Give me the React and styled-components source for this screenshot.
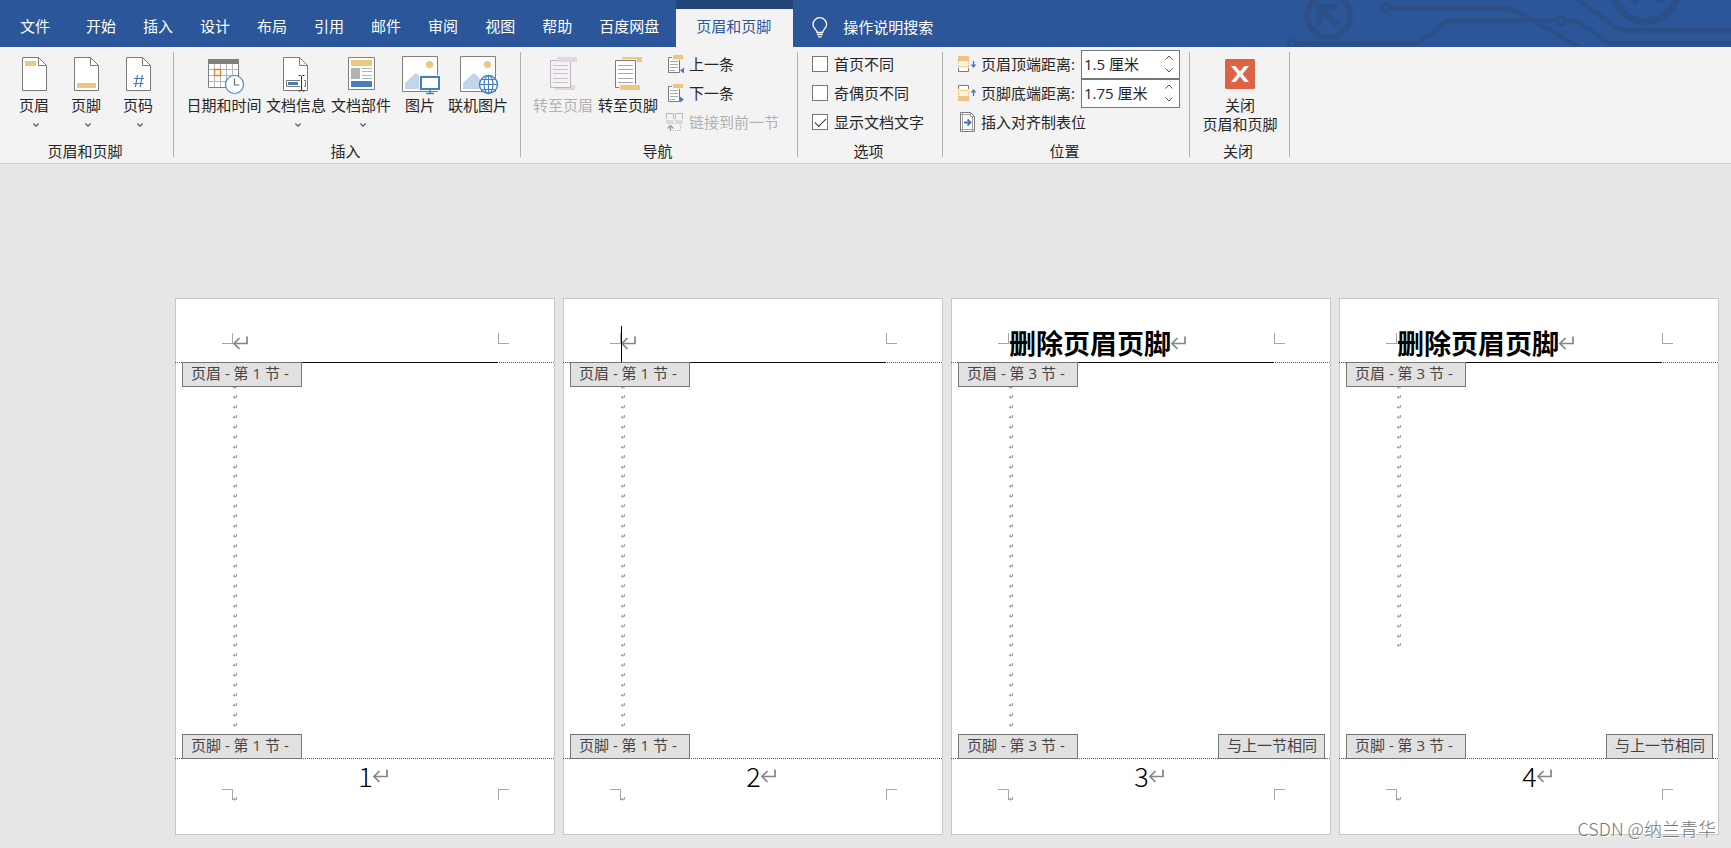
import React, { useState } from 'react';
import styled, { createGlobalStyle } from 'styled-components';

const tabs = ['开始', '插入', '设计', '布局', '引用', '邮件', '审阅', '视图', '帮助', '百度网盘'];

const pages = [
    { no: 1, section: 1, title: '', lines: 35 },
    { no: 2, section: 1, title: '', lines: 35, caret: true },
    { no: 3, section: 3, title: '删除页眉页脚', lines: 35, linked: true },
    { no: 4, section: 3, title: '删除页眉页脚', lines: 27, linked: true },
];

/* ---------- icons ---------- */

const Big = ({ children }) => (
    <svg width="38" height="38" viewBox="0 0 38 38" fill="none" overflow="visible" aria-hidden="true">{children}</svg>
);

const Small = ({ children }) => (
    <svg width="18" height="18" viewBox="0 0 18 18" fill="none" overflow="visible" aria-hidden="true">{children}</svg>
);

const Sheet = ({ x = 7 }) => (
    <g transform={`translate(${x} 1)`} stroke="#7a7a7a">
        <path d="M.5.5h16l8 8v25H.5z" fill="#fff" />
        <path d="M16.5.5v8h8" />
    </g>
);

const HeaderIcon = () => <Big><Sheet /><path d="M10 5h11v5H10z" fill="#eec77f" /></Big>;
const FooterIcon = () => <Big><Sheet /><path d="M10 27h19v5H10z" fill="#eec77f" /></Big>;
const NumberIcon = () => (
    <Big><Sheet /><path d="M18.6 19l-2.2 12M23.4 19l-2.2 12M15 22.5h10M14.4 27.5h10" stroke="#4580bb" strokeWidth="1.2" /></Big>
);

const CalendarIcon = () => (
    <Big>
        <path d="M3.5 4v27.5h30V4z" fill="#fff" stroke="#7f7f7f" />
        <path d="M9.5 8v23M15.5 8v23M21.5 8v23M27.5 8v23M4 13.5h29M4 19.5h29M4 25.5h29" stroke="#b5b5b5" />
        <path d="M3 3h31v5H3z" fill="#7f7f7f" />
        <path d="M9.5 13.5h6v6h-6z" fill="#fff" stroke="#e2803a" strokeWidth="1.3" />
        <circle cx="29.5" cy="28.5" r="9" fill="#fff" stroke="#4b86c2" strokeWidth="1.2" />
        <path d="M29.5 22.5v6.500h5" stroke="#6e6e6e" strokeWidth="1.2" />
    </Big>
);

const DocInfoIcon = () => (
    <Big>
        <Sheet x={6} />
        <path d="M23 24.5H9.5v6H23M27 24.5h1.5v6H27" stroke="#7a7a7a" />
        <path d="M11 26h10v3H11z" fill="#4580bb" />
        <path d="M24.5 20v15M21.5 19.5h2l1 1 1-1h2M21.5 35h2l1-1 1 1h2" stroke="#333" />
    </Big>
);

const PartsIcon = () => (
    <Big>
        <path d="M6.5 1.5h26v32h-26z" fill="#fff" stroke="#7f7f7f" />
        <path d="M9 4h21v6H9z" fill="#eec77f" />
        <path d="M9 12h9v11H9z" fill="#b3b3b3" />
        <path d="M20 12.5h10M20 15.5h10M20 19.5h10M20 22.5h10" stroke="#b3b3b3" />
        <path d="M9 25h21v6H9z" fill="#4580bb" />
    </Big>
);

const Photo = () => (
    <>
        <path d="M1.5.5h35v35h-35z" fill="#fff" stroke="#7f7f7f" />
        <circle cx="28.5" cy="8.5" r="3.6" fill="#eec77f" />
        <path d="M4 33v-6l10-9.500h2l8 8.500v7z" fill="#c3d5ea" />
    </>
);

const PictureIcon = () => (
    <Big>
        <Photo />
        <path d="M18 19h22v16H18z" fill="#f3f3f3" />
        <path d="M20 21h18v12H20z" fill="#fff" stroke="#4580bb" strokeWidth="2" />
        <path d="M29 34v3M25 37.5h8" stroke="#4580bb" strokeWidth="1.4" />
    </Big>
);

const OnlinePictureIcon = () => (
    <Big>
        <Photo />
        <circle cx="29.5" cy="28.5" r="9" fill="#fff" stroke="#4580bb" strokeWidth="1.4" />
        <ellipse cx="29.5" cy="28.5" rx="4.5" ry="9" stroke="#4580bb" strokeWidth="1.2" />
        <path d="M29.5 19.5v18M20.5 28.5h18M22.5 23.5h14M22.5 33.5h14" stroke="#4580bb" strokeWidth="1.2" />
    </Big>
);

const GotoHeaderIcon = () => (
    <Big>
        <path d="M11 29h20v5H11z" fill="#dcd8dc" />
        <path d="M6.5 4.5h20v27h-20z" fill="#f6f1f6" stroke="#bab4ba" />
        <path d="M9 9.5h15M9 13.5h15M9 17.5h15M9 22.5h15M9 26.5h15" stroke="#c9c3c9" />
        <path d="M13 1h20v5H13z" fill="#dcd8dc" />
    </Big>
);

const GotoFooterIcon = () => (
    <Big>
        <path d="M13 1h20v5H13z" fill="#eec77f" />
        <path d="M5 3h23v28H5z" fill="#f3f3f3" />
        <path d="M6.5 4.5h20v27h-20z" fill="#fff" stroke="#7a7a7a" />
        <path d="M9 9.5h15M9 13.5h15M9 17.5h15M9 22.5h15M9 26.5h15" stroke="#a6a6a6" />
        <path d="M10 28h22v6H10z" fill="#f3f3f3" />
        <path d="M11 29h20v5H11z" fill="#eec77f" />
    </Big>
);

const StepIcon = ({ next }) => (
    <Small>
        <path d="M2.5 2.5h11v15h-11z" fill="#fff" stroke="#7a7a7a" />
        <path d="M4 6.5h8M4 9.5h8M4 12.5h8M4 15.5h5" stroke="#a6a6a6" />
        <path d="M6 0h12v5H6z" fill="#f3f3f3" />
        <path d="M7 0h10v4H7z" fill="#eec482" />
        <path d="M14 12h4v6h-4z" fill="#f3f3f3" />
        <path d={next ? 'M14 12.500v6l4-3z' : 'M18 12.500v6l-4-3z'} fill="#4580bb" />
    </Small>
);

const LinkPrevIcon = () => (
    <Small>
        <path d="M.5 6V.5h7V6M9.5 6V.5h7V6" fill="#f6f1f6" stroke="#b9b4b9" />
        <path d="M0 7h8v4H0zM9 7h8v4H9z" fill="#dcd8dc" />
        <path d="M4.5 18v-5M1.5 15.5l3-3 3 3" stroke="#a9a4a9" strokeWidth="1.5" />
        <path d="M7 17.5h8M14.5 12v6" stroke="#b9b4b9" strokeDasharray="1 1" />
    </Small>
);

const TopDistIcon = () => (
    <Small>
        <path d="M0 1h11v5H0z" fill="#eec482" />
        <path d="M.5 6v6M10.5 6v6M0 11.5h11" stroke="#eeb95f" strokeDasharray="1 1" />
        <path d="M.5 13v3.500h10V13" fill="#fff" stroke="#7a7a7a" />
        <path d="M15.5 6v6M13.5 9.5l2 2.500 2-2.500" stroke="#3f7ab5" strokeWidth="1.3" />
    </Small>
);

const BottomDistIcon = () => (
    <Small>
        <path d="M.5 5V1.500h10V5" fill="#fff" stroke="#7a7a7a" />
        <path d="M.5 6v6M10.5 6v6M0 6.5h11" stroke="#eeb95f" strokeDasharray="1 1" />
        <path d="M0 12h11v5H0z" fill="#eec482" />
        <path d="M15.5 12V6M13.5 8.5l2-2.500 2 2.500" stroke="#3f7ab5" strokeWidth="1.3" />
    </Small>
);

const AlignTabIcon = () => (
    <Small>
        <path d="M2.5-.5h10l4 4v15h-14z" fill="#fff" stroke="#7a7a7a" />
        <path d="M12.5-.5v4h4M4.5 0v18M14.5 4v14M3 1.5h9M3 16.5h13" stroke="#a3a3a3" />
        <path d="M6 9.5h6M9.5 6.5l3 3-3 3" stroke="#3f7ab5" strokeWidth="1.8" />
    </Small>
);

const CloseIcon = () => (
    <Big>
        <rect x="4" y="3" width="30" height="30" rx="1.5" fill="#dc6344" />
        <path d="M10 10h4.500l4.500 5.500 4.500-5.500H28l-6.500 8 6.500 8h-4.500L19 20.500 14.500 26H10l6.500-8z" fill="#fff" />
    </Big>
);

const BulbIcon = () => (
    <svg width="16" height="21" viewBox="0 0 16 21" fill="none" stroke="#fff" strokeWidth="1.3" aria-hidden="true">
        <path d="M5 15.5c0-3-4-4-4-8a6.800 6.800 0 0 1 13.600 0c0 4-4 5-4 8zM5 17.5h5.600M6 19.8h3.600" />
    </svg>
);

const Chevron = ({ up, wide }) => (
    <svg width={wide ? 8 : 6} height={wide ? 5 : 4} viewBox="0 0 8 5" fill="none" aria-hidden="true">
        <path d={up ? 'M.5 4.500l3.500-3.500 3.500 3.500' : 'M.5.5l3.500 3.500L7.500.5'} stroke="#555" strokeWidth={wide ? 1 : 1.5} />
    </svg>
);

const ReturnMark = () => (
    <svg width="15" height="14" viewBox="0 0 15 14" fill="none" stroke="#858585" strokeWidth="1.7" aria-hidden="true">
        <path d="M14 .5v7H1.5M6.5 2L1 7.500l5.500 5.500" />
    </svg>
);

const TinyMark = () => (
    <svg width="4" height="4" viewBox="0 0 4 4" fill="none" stroke="#7d7d7d" strokeWidth=".8" aria-hidden="true">
        <path d="M3.6 0v2.300H.5M1.7.8L.4 2.300l1.300 1.300" />
    </svg>
);

const Circuit = () => (
    <Art width="461" height="47" viewBox="0 0 1383 141" fill="none" stroke="#2b4f86" strokeWidth="14" aria-hidden="true">
        <circle cx="176" cy="48" r="64" strokeWidth="18" />
        <path d="M148 75V21h54M152 25l50 50" strokeWidth="18" />
        <circle cx="348" cy="22" r="12" strokeWidth="11" />
        <circle cx="66" cy="132" r="12" strokeWidth="11" />
        <circle cx="873" cy="62" r="12" strokeWidth="11" />
        <path d="M362 25h350q12 0 26 8l190 108" />
        <path d="M80 132h356q8 0 16-6l68-56q12-9 24-9h314M888 61h16q14 0 26 8l78 56q10 6 22 6h360" />
        <path d="M918-4l126 90q8 5 20 5h330" />
        <circle cx="1127" cy="-34" r="98" strokeWidth="22" />
        <path d="M1072-16l22 22 22-22M1155 0h26" strokeWidth="16" />
    </Art>
);

/* ---------- parts ---------- */

function Tool({ icon, label, width, menu, disabled }) {
    return (
        <ToolButton type="button" $width={width} disabled={disabled}>
            {icon}
            <span>{label}</span>
            {menu && <MenuArrow><Chevron /></MenuArrow>}
        </ToolButton>
    );
}

function Group({ name, width, children }) {
    return (
        <GroupBox $width={width} aria-label={name}>
            <GroupMain>
                <GroupBody>{children}</GroupBody>
                <GroupName>{name}</GroupName>
            </GroupMain>
            <Divider />
        </GroupBox>
    );
}

function Distance({ id, icon, label, initial }) {
    const [value, setValue] = useState(initial);

    const step = (diff) => {
        const next = Math.max(0, (parseFloat(value) || 0) + diff);
        setValue(`${Number(next.toFixed(2))} 厘米`);
    };

    return (
        <DistanceRow>
            <label htmlFor={id}>{icon}{label}</label>
            <Spinner>
                <input id={id} type="text" value={value} onChange={(e) => setValue(e.target.value)} />
                <div>
                    <button type="button" aria-label="增加" onClick={() => step(0.1)}><Chevron up wide /></button>
                    <button type="button" aria-label="减少" onClick={() => step(-0.1)}><Chevron wide /></button>
                </div>
            </Spinner>
        </DistanceRow>
    );
}

function Option({ label, checked }) {
    return (
        <OptionRow>
            <input type="checkbox" defaultChecked={checked} />
            {label}
        </OptionRow>
    );
}

function Page({ no, section, title, lines, caret, linked }) {
    return (
        <Paper>
            <PageHeader>
                <Corner $side="left" $edge="bottom" />
                <HeaderText>
                    {caret && <Caret />}
                    {title && <h2>{title}</h2>}
                    <ReturnMark />
                </HeaderText>
                <Corner $side="right" $edge="bottom" />
            </PageHeader>
            <DottedRule><HeaderLine /></DottedRule>
            <PageBody>
                <Tag $top>页眉 - 第 {section} 节 -</Tag>
                <Marks>
                    {Array.from({ length: lines }, (_, i) => <li key={i}><TinyMark /></li>)}
                </Marks>
                <Tag>页脚 - 第 {section} 节 -</Tag>
                {linked && <Tag $right>与上一节相同</Tag>}
            </PageBody>
            <DottedRule />
            <PageFooter>
                <Corner $side="left" $edge="top"><TinyMark /></Corner>
                <FooterText>{no}<ReturnMark /></FooterText>
                <Corner $side="right" $edge="top" />
            </PageFooter>
        </Paper>
    );
}

function App() {
    return (
        <Window>
            <GlobalStyle />
            <TabBar>
                <Circuit />
                <FileTab type="button">文件</FileTab>
                {tabs.map((tab) => <Tab type="button" key={tab}>{tab}</Tab>)}
                <ActiveTab type="button">页眉和页脚</ActiveTab>
                <TellMe type="button"><BulbIcon />操作说明搜索</TellMe>
            </TabBar>

            <Ribbon>
                <Group name="页眉和页脚" width={174}>
                    <Tools $pad={8}>
                        <Tool icon={<HeaderIcon />} label="页眉" width={52} menu />
                        <Tool icon={<FooterIcon />} label="页脚" width={52} menu />
                        <Tool icon={<NumberIcon />} label="页码" width={52} menu />
                    </Tools>
                </Group>
                <Group name="插入" width={347}>
                    <Tools $pad={10}>
                        <Tool icon={<CalendarIcon />} label="日期和时间" width={80} />
                        <Tool icon={<DocInfoIcon />} label="文档信息" width={64} menu />
                        <Tool icon={<PartsIcon />} label="文档部件" width={66} menu />
                        <Tool icon={<PictureIcon />} label="图片" width={52} />
                        <Tool icon={<OnlinePictureIcon />} label="联机图片" width={64} />
                    </Tools>
                </Group>
                <Group name="导航" width={277}>
                    <Tools $pad={10}>
                        <Tool icon={<GotoHeaderIcon />} label="转至页眉" width={64} disabled />
                        <Tool icon={<GotoFooterIcon />} label="转至页脚" width={66} />
                    </Tools>
                    <Rows $pad={5}>
                        <RowButton type="button"><StepIcon />上一条</RowButton>
                        <RowButton type="button"><StepIcon next />下一条</RowButton>
                        <RowButton type="button" disabled><LinkPrevIcon />链接到前一节</RowButton>
                    </Rows>
                </Group>
                <Group name="选项" width={145}>
                    <Rows $pad={14}>
                        <Option label="首页不同" />
                        <Option label="奇偶页不同" />
                        <Option label="显示文档文字" checked />
                    </Rows>
                </Group>
                <Group name="位置" width={247}>
                    <Rows $pad={15}>
                        <Distance id="top" icon={<TopDistIcon />} label="页眉顶端距离:" initial="1.5 厘米" />
                        <Distance id="bottom" icon={<BottomDistIcon />} label="页脚底端距离:" initial="1.75 厘米" />
                        <RowButton type="button"><AlignTabIcon />插入对齐制表位</RowButton>
                    </Rows>
                </Group>
                <Group name="关闭" width={100}>
                    <Tools $pad={8}>
                        <Tool icon={<CloseIcon />} label={<>关闭<br />页眉和页脚</>} width={84} />
                    </Tools>
                </Group>
            </Ribbon>

            <Workspace>
                {pages.map((page) => <Page key={page.no} {...page} />)}
                <Watermark>CSDN @纳兰青华</Watermark>
            </Workspace>
        </Window>
    );
}

export default App;

/* ---------- styles ---------- */

const GlobalStyle = createGlobalStyle`
    * {
        box-sizing: border-box;
    }
    body {
        margin: 0;
        background: #e6e6e6;
        font-family: "Open Sans", "Noto Sans CJK SC", sans-serif;
        font-size: 15px;
        color: #262626;
    }
    button, input {
        margin: 0;
        padding: 0;
        border: 0;
        background: none;
        font: inherit;
        color: inherit;
    }
    svg {
        display: block;
        flex: none;
    }
`

const Window = styled.div`
    display: flex;
    flex-direction: column;
    min-height: 100vh;
`

const TabBar = styled.nav`
    position: relative;
    display: flex;
    height: 47px;
    background: #2b579a;
    color: #fff;
    white-space: nowrap;
`

const Art = styled.svg`
    position: absolute;
    top: 0;
    right: 0;
`

const Tab = styled.button`
    padding: 4px 13px 0 14px;
    line-height: 20px;
`

const FileTab = styled(Tab)`
    padding: 4px 22px 0 20px;
`

const ActiveTab = styled(Tab)`
    margin-left: 4px;
    padding: 0 22px 5px 20px;
    border-top: 9px solid #24457a;
    background: #f3f3f3;
    color: #2b579a;
`

const TellMe = styled(Tab)`
    display: flex;
    align-items: center;
    gap: 15px;
    padding: 7px 19px 0;
`

const Ribbon = styled.section`
    display: flex;
    height: 117px;
    background: #f3f3f3;
    border-bottom: 1px solid #cfcfcf;
    white-space: nowrap;
`

const GroupBox = styled.div`
    display: flex;
    flex: none;
    width: ${({ $width }) => $width}px;
`

const GroupMain = styled.div`
    display: flex;
    flex: 1;
    flex-direction: column;
`

const GroupBody = styled.div`
    display: flex;
    flex: 1;
`

const GroupName = styled.div`
    height: 23px;
    padding-right: 3px;
    line-height: 22px;
    text-align: center;
`

const Divider = styled.div`
    width: 1px;
    margin: 5px 0 6px;
    background: #b1b1b1;
`

const Tools = styled.div`
    display: flex;
    padding: 9px 0 0 ${({ $pad }) => $pad}px;
`

const ToolButton = styled.button`
    display: flex;
    flex-direction: column;
    align-items: center;
    width: ${({ $width }) => $width}px;
    line-height: 19px;
    span {
        margin-top: 2px;
    }
    &:disabled {
        color: #b1b1b1;
    }
`

const MenuArrow = styled.i`
    padding: 8px 0 0 4px;
`

const Rows = styled.div`
    display: flex;
    flex-direction: column;
    padding: 3px 0 0 ${({ $pad }) => $pad}px;
`

const RowButton = styled.button`
    display: flex;
    align-items: center;
    gap: 5px;
    height: 29px;
    padding-bottom: 1px;
    line-height: 20px;
    &:disabled {
        color: #b1b1b1;
    }
`

const OptionRow = styled.label`
    display: flex;
    align-items: center;
    gap: 6px;
    height: 29px;
    padding-bottom: 1px;
    line-height: 20px;
    input {
        display: grid;
        place-items: center;
        width: 16px;
        height: 16px;
        border: 1px solid #767676;
        background: #fff;
        appearance: none;
    }
    input:checked::before {
        content: '';
        width: 10px;
        height: 5px;
        margin-bottom: 3px;
        border: solid #333;
        border-width: 0 0 1px 1px;
        transform: rotate(-45deg);
    }
`

const DistanceRow = styled.div`
    display: flex;
    height: 29px;
    line-height: 20px;
    label {
        display: flex;
        align-items: center;
        gap: 5px;
        width: 123px;
        padding-bottom: 1px;
    }
`

const Spinner = styled.div`
    display: flex;
    width: 99px;
    height: 29px;
    border: 1px solid #767676;
    background: #fff;
    input {
        flex: 1;
        min-width: 0;
        padding: 0 0 2px 2px;
        outline: none;
    }
    div {
        display: flex;
        flex-direction: column;
        width: 21px;
        padding-bottom: 1px;
    }
    button {
        flex: 1;
        display: grid;
        place-items: center;
    }
`

const Workspace = styled.main`
    position: relative;
    flex: 1;
    display: grid;
    grid-template-columns: repeat(4, 1fr);
    align-items: start;
    gap: 8px;
    padding: 134px 12px 13px 175px;
`

const Paper = styled.article`
    border: 1px solid #c6c6c6;
    background: #fff;
`

const PageHeader = styled.header`
    display: grid;
    grid-template-columns: 57px 1fr 56px;
    height: 63px;
`

const PageFooter = styled.footer`
    display: grid;
    grid-template-columns: 57px 1fr 56px;
    height: 75px;
`

const Corner = styled.div`
    position: relative;
    width: 11px;
    height: 11px;
    margin-top: ${({ $edge }) => ($edge === 'bottom' ? 34 : 30)}px;
    justify-self: ${({ $side }) => ($side === 'left' ? 'end' : 'start')};
    border: 0 solid #a6a6a6;
    ${({ $side }) => ($side === 'left' ? 'border-right-width: 1px;' : 'border-left-width: 1px;')}
    ${({ $edge }) => `border-${$edge}-width: 1px;`}
    svg {
        position: absolute;
        top: 7px;
        left: 11px;
    }
`

const HeaderText = styled.div`
    position: relative;
    display: flex;
    align-items: center;
    padding-top: 24px;
    white-space: nowrap;
    h2 {
        margin: 0;
        padding-top: 3px;
        font-size: 27px;
        font-weight: 700;
        line-height: 36px;
        color: #000;
    }
`

const Caret = styled.i`
    position: absolute;
    bottom: 0;
    left: 0;
    width: 1px;
    height: 36px;
    background: #000;
`

const DottedRule = styled.div`
    height: 1px;
    margin: 0 -1px;
    background: repeating-linear-gradient(90deg, #555 0 1px, #fff 1px 2px);
`

const HeaderLine = styled.div`
    height: 1px;
    margin: 0 57px 0 58px;
    background: #111;
`

const PageBody = styled.div`
    position: relative;
    height: 395px;
    padding: 19px 0 28px 57px;
`

const Marks = styled.ul`
    display: grid;
    grid-template-rows: repeat(35, 1fr);
    align-items: center;
    height: 100%;
    margin: 0;
    padding: 0;
    list-style: none;
`

const Tag = styled.div`
    position: absolute;
    ${({ $top }) => ($top ? 'top: -1px;' : 'bottom: -1px;')}
    ${({ $right }) => ($right ? 'right: 5px;' : 'left: 6px;')}
    width: ${({ $right }) => ($right ? 107 : 120)}px;
    height: 25px;
    padding-left: 8px;
    border: 1px solid #767676;
    background: #e1e1e1;
    color: #444;
    line-height: 21px;
    white-space: nowrap;
`

const FooterText = styled.div`
    display: flex;
    justify-content: center;
    height: 36px;
    font-family: "Noto Sans CJK SC", sans-serif;
    font-size: 27px;
    font-weight: 300;
    line-height: 34px;
    color: #000;
    svg {
        margin: 10px -15px 0 0;
    }
`

const Watermark = styled.div`
    position: absolute;
    right: 15px;
    bottom: 8px;
    font-family: "Noto Sans CJK SC", sans-serif;
    font-size: 18px;
    font-weight: 300;
    line-height: 24px;
    color: #777;
    text-shadow: 1px 1px 0 #fff;
`
